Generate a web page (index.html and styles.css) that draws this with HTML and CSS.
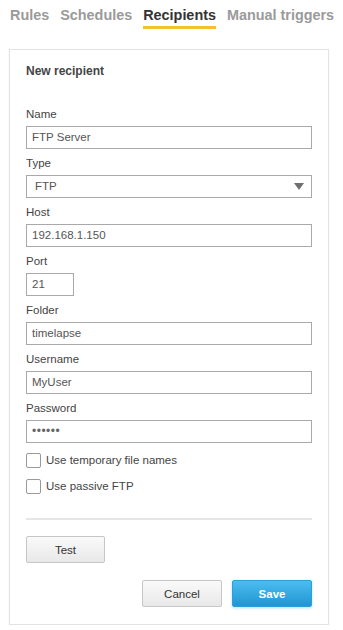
FILE: index.html
```html
<!DOCTYPE html>
<html>
<head>
<meta charset="utf-8">
<link rel="stylesheet" href="styles.css">
</head>
<body>
<nav class="tabs">
  <span class="tab">Rules</span>
  <span class="tab">Schedules</span>
  <span class="tab active">Recipients</span>
  <span class="tab">Manual triggers</span>
</nav>
<div class="card">
  <div class="title">New recipient</div>
  <div class="field">
    <label class="label">Name</label>
    <div class="input">FTP Server</div>
  </div>
  <div class="field">
    <label class="label">Type</label>
    <div class="input select"><span>FTP</span><span class="arrow"></span></div>
  </div>
  <div class="field">
    <label class="label">Host</label>
    <div class="input">192.168.1.150</div>
  </div>
  <div class="field">
    <label class="label">Port</label>
    <div class="input short">21</div>
  </div>
  <div class="field">
    <label class="label">Folder</label>
    <div class="input">timelapse</div>
  </div>
  <div class="field">
    <label class="label">Username</label>
    <div class="input">MyUser</div>
  </div>
  <div class="field">
    <label class="label">Password</label>
    <div class="input dots">&#8226;&#8226;&#8226;&#8226;&#8226;&#8226;</div>
  </div>
  <div class="check"><span class="box"></span><span>Use temporary file names</span></div>
  <div class="check"><span class="box"></span><span>Use passive FTP</span></div>
  <hr class="sep">
  <div class="btn test">Test</div>
  <div class="actions">
    <div class="btn">Cancel</div>
    <div class="btn primary">Save</div>
  </div>
</div>
</body>
</html>
```
FILE: styles.css
```css
* { box-sizing: border-box; }
body {
  margin: 0;
  background: #fff;
  font-family: "Liberation Sans", Arial, sans-serif;
  color: #444;
}
.tabs {
  display: flex;
  gap: 11px;
  padding: 4px 0 0 10px;
  height: 49px;
}
.tab {
  font-size: 14.4px;
  font-weight: bold;
  color: #9a9a9a;
  line-height: 18px;
  height: 25px;
  padding-top: 2px;
  white-space: nowrap;
}
.tab.active {
  color: #333;
  border-bottom: 3px solid #f0c22e;
  height: 25px;
}
.card {
  margin-left: 9px;
  width: 320px;
  border: 1px solid #e3e3e3;
  box-shadow: 0 1px 2px rgba(0,0,0,0.06);
  padding: 14px 16px 17px 16px;
}
.title {
  font-size: 12px;
  font-weight: bold;
  color: #444;
  line-height: 14px;
  margin-bottom: 29px;
}
.field { margin-bottom: 7px; }
.label {
  display: block;
  font-size: 11.5px;
  line-height: 14px;
  color: #444;
  margin-bottom: 5px;
}
.input {
  height: 23px;
  border: 1px solid #a9a9a9;
  font-size: 11.5px;
  color: #555;
  line-height: 21px;
  padding-left: 5px;
}
.input.short { width: 48px; }
.input.select {
  display: flex;
  justify-content: space-between;
  align-items: center;
  padding-left: 8px;
  padding-right: 7px;
}
.arrow {
  width: 0; height: 0;
  border-left: 5px solid transparent;
  border-right: 5px solid transparent;
  border-top: 7px solid #707070;
}
.input.dots { letter-spacing: 0.5px; font-size: 12px; color: #666; }
.check {
  display: flex;
  align-items: center;
  gap: 5px;
  font-size: 11.5px;
  color: #444;
  height: 16px;
  margin-top: 9px;
  margin-bottom: 2px;
}
.check + .check { margin-top: 10px; }
.box {
  width: 15px; height: 15px;
  border: 1px solid #9a9a9a;
  border-radius: 2px;
  background: #fff;
}
.sep {
  border: 0;
  height: 2px;
  background: #e6e6e6;
  margin: 24px 0 16px 0;
}
.btn {
  width: 80px;
  height: 27px;
  border: 1px solid #c6c6c6;
  border-radius: 2px;
  background: linear-gradient(#fafafa, #e8e8e8);
  font-size: 11.5px;
  color: #333;
  display: flex;
  align-items: center;
  justify-content: center;
}
.btn.test { width: 79px; }
.actions {
  display: flex;
  justify-content: flex-end;
  gap: 10px;
  margin-top: 17px;
}
.btn.primary {
  border: 1px solid #2a9fd8;
  background: linear-gradient(#4dbdf0, #1f95d3);
  color: #fff;
  font-weight: bold;
  box-shadow: 0 1px 3px rgba(40,160,220,0.35);
}
```
